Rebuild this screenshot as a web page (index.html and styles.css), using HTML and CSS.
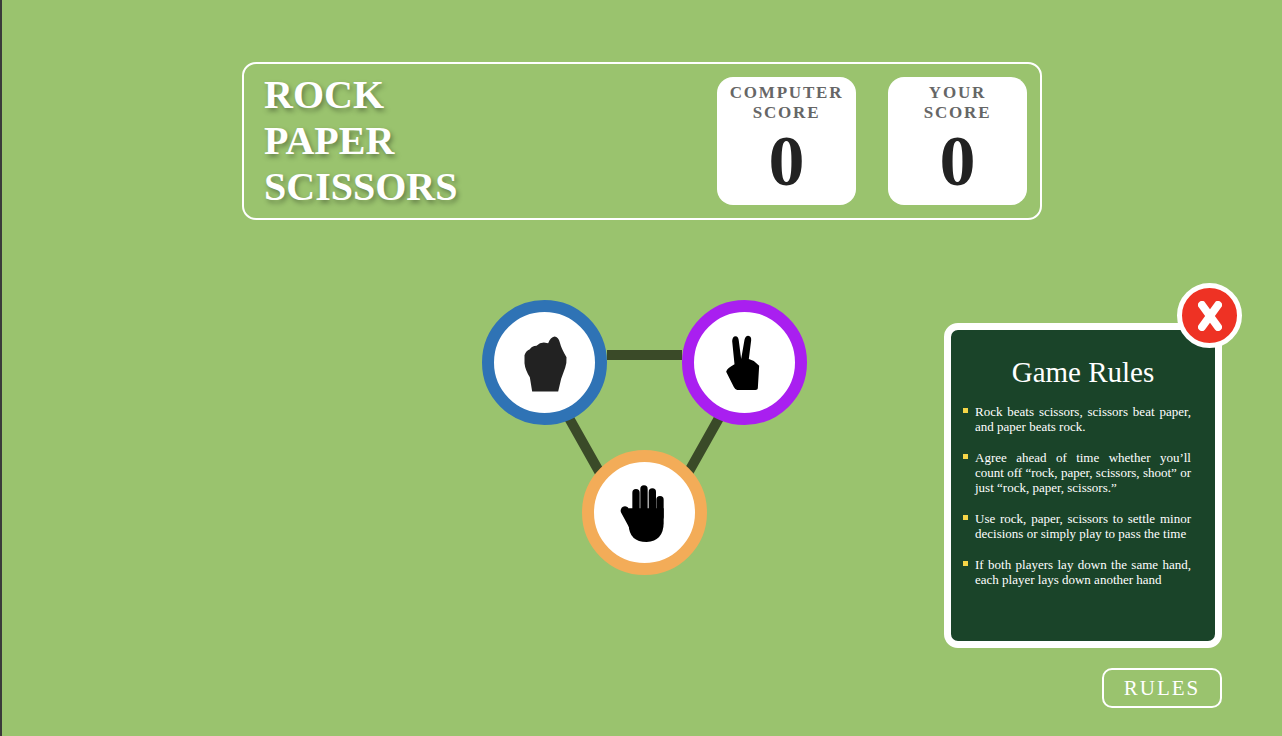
FILE: index.html
```html
<!DOCTYPE html>
<html lang="en">
<head>
    <meta charset="UTF-8">
    <meta name="viewport" content="width=device-width, initial-scale=1.0">
    <title>Rock Paper Scissors</title>
    <link rel="stylesheet" href="styles.css">
</head>
<body>
    <header class="score-board">
        <h1 class="title">ROCK<br>PAPER<br>SCISSORS</h1>
        <div class="scores">
            <div class="score-card">
                <p class="score-label">COMPUTER<br>SCORE</p>
                <p class="score-value">0</p>
            </div>
            <div class="score-card">
                <p class="score-label">YOUR<br>SCORE</p>
                <p class="score-value">0</p>
            </div>
        </div>
    </header>

    <main class="board">
        <svg class="board-lines" width="330" height="275" viewBox="0 0 330 275">
            <line x1="130" y1="55" x2="205" y2="55"></line>
            <line x1="92" y1="118" x2="128" y2="182"></line>
            <line x1="242" y1="118" x2="206" y2="182"></line>
        </svg>
        <button class="choice choice-rock">
            <svg width="80" height="70" viewBox="-16.5 -7.5 240 210">
                <path fill="#222" d="M65 183 L58 140 Q44 118 42 98 L42 74 Q46 60 58 56 Q64 47 78 46 Q88 36 100 36 L113 38 Q120 20 132 18 Q144 20 148 36 Q153 56 168 80 Q169 100 164 112 L152 145 L143 183 Z"></path>
            </svg>
        </button>
        <button class="choice choice-scissors">
            <svg width="70" height="75" viewBox="-1.5 0 210 225">
                <path fill="#000" d="M47 140 Q50 130 72 118 L65 48 Q66 34 75 34 Q84 34 85 48 L92 102 L102 44 Q105 32 113 32 Q123 33 122 46 L115 102 L130 108 L146 122 L142 190 Q142 195 135 195 L80 195 Q74 194 70 186 Z"></path>
            </svg>
        </button>
        <button class="choice choice-paper">
            <svg width="75" height="75" viewBox="6 0 225 225">
                <path fill="#000" d="M71 112 L71 150 Q73 201 125 201 Q175 198 176 145 L176 100 L71 100 Z"></path>
                <g class="hand-fingers">
                    <line x1="93" y1="53" x2="93" y2="125"></line>
                    <line x1="117" y1="42" x2="117" y2="125"></line>
                    <line x1="142" y1="51" x2="142" y2="125"></line>
                    <line x1="165" y1="74" x2="165" y2="125"></line>
                    <line class="hand-thumb" x1="60" y1="107" x2="86" y2="155"></line>
                </g>
            </svg>
        </button>
    </main>

    <footer class="actions">
        <button class="rules-btn">RULES</button>
    </footer>

    <section class="rules-panel">
        <button class="close-btn">
            <svg width="24" height="30" viewBox="0 0 24 30">
                <line x1="4" y1="4" x2="20" y2="26"></line>
                <line x1="20" y1="4" x2="4" y2="26"></line>
            </svg>
        </button>
        <h2 class="rules-title">Game Rules</h2>
        <ul class="rules-list">
            <li>Rock beats scissors, scissors beat paper, and paper beats rock.</li>
            <li>Agree ahead of time whether you’ll count off “rock, paper, scissors, shoot” or just “rock, paper, scissors.”</li>
            <li>Use rock, paper, scissors to settle minor decisions or simply play to pass the time</li>
            <li>If both players lay down the same hand, each player lays down another hand</li>
        </ul>
    </section>
</body>
</html>
```

FILE: styles.css
```css
* {
    box-sizing: border-box;
}
body {
    margin: 0;
    height: 736px;
    overflow: hidden;
    position: relative;
    border-left: 2px solid #3a3a3a;
    background-color: #9ac36e;
    font-family: "Liberation Serif", "Times New Roman", serif;
    color: white;
}
.score-board {
    width: 800px;
    height: 158px;
    margin: 62px auto 0;
    padding: 8px 13px 13px 20px;
    display: flex;
    justify-content: space-between;
    border: 2px solid white;
    border-radius: 14px;
}
.title {
    margin: 0;
    font-size: 40px;
    line-height: 46px;
    font-weight: bold;
    text-shadow: 2px 3px 5px rgba(0, 0, 0, 0.35);
}
.scores {
    display: flex;
    gap: 32px;
    margin-top: 5px;
}
.score-card {
    width: 139px;
    height: 128px;
    padding-top: 6px;
    background-color: white;
    border-radius: 16px;
    text-align: center;
}
.score-label {
    margin: 0;
    font-size: 17px;
    line-height: 20px;
    font-weight: bold;
    letter-spacing: 1.8px;
    color: #666;
}
.score-value {
    margin: 0;
    font-size: 72px;
    line-height: 76px;
    font-weight: bold;
    color: #222;
}
.board {
    position: relative;
    width: 330px;
    height: 275px;
    margin: 80px auto 0;
}
.board-lines {
    position: absolute;
    left: 0;
    top: 0;
}
.board-lines line {
    stroke: #3a4a28;
    stroke-width: 10;
}
.choice {
    position: absolute;
    width: 125px;
    height: 125px;
    padding: 0;
    display: flex;
    align-items: center;
    justify-content: center;
    background-color: white;
    border: 12px solid;
    border-radius: 50%;
}
.choice-rock {
    left: 5px;
    top: 0;
    border-color: #2f73b5;
}
.choice-scissors {
    left: 205px;
    top: 0;
    border-color: #a91ff0;
}
.choice-paper {
    left: 105px;
    top: 150px;
    border-color: #f3ac58;
}
.hand-fingers line {
    stroke: #000;
    stroke-width: 22;
    stroke-linecap: round;
}
.hand-fingers .hand-thumb {
    stroke-width: 26;
}
.actions {
    display: flex;
    justify-content: flex-end;
    margin-top: 93px;
    padding-right: 60px;
}
.rules-btn {
    width: 120px;
    height: 40px;
    padding: 0;
    background: none;
    border: 2px solid white;
    border-radius: 10px;
    font-family: inherit;
    font-size: 21px;
    letter-spacing: 2px;
    color: white;
}
.rules-panel {
    position: absolute;
    top: 323px;
    right: 60px;
    width: 278px;
    height: 325px;
    padding: 24px 24px 0;
    background-color: #1a4429;
    border: 7px solid white;
    border-radius: 14px;
}
.close-btn {
    position: absolute;
    top: -47px;
    right: -27px;
    width: 65px;
    height: 65px;
    padding: 0;
    display: flex;
    align-items: center;
    justify-content: center;
    background-color: #ee3224;
    border: 5px solid white;
    border-radius: 50%;
}
.close-btn line {
    stroke: white;
    stroke-width: 8;
    stroke-linecap: round;
}
.rules-title {
    margin: 0 0 14px;
    font-size: 29px;
    line-height: 36px;
    font-weight: normal;
    text-align: center;
}
.rules-list {
    margin: 0;
    padding: 0;
    list-style: none;
    font-size: 13px;
    line-height: 15px;
    text-align: justify;
}
.rules-list li {
    position: relative;
    margin-bottom: 16px;
}
.rules-list li::before {
    content: "";
    position: absolute;
    left: -12px;
    top: 4px;
    width: 5px;
    height: 5px;
    background-color: #f5d547;
}
```
